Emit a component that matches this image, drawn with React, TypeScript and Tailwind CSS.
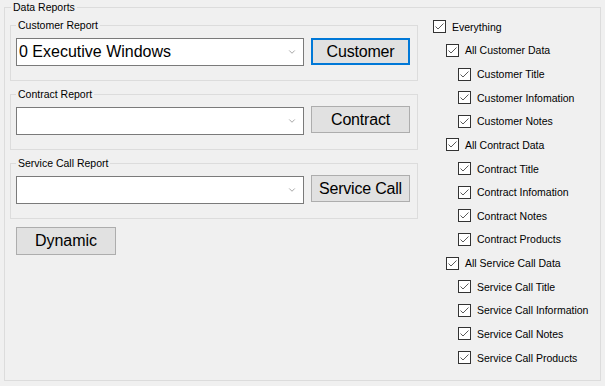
import { ChevronDown } from "lucide-react";

type TCheckItem = {
  text: string;
  level: number;
};

const checkItems: Array<TCheckItem> = [
  { text: "Everything", level: 0 },
  { text: "All Customer Data", level: 1 },
  { text: "Customer Title", level: 2 },
  { text: "Customer Infomation", level: 2 },
  { text: "Customer Notes", level: 2 },
  { text: "All Contract Data", level: 1 },
  { text: "Contract Title", level: 2 },
  { text: "Contract Infomation", level: 2 },
  { text: "Contract Notes", level: 2 },
  { text: "Contract Products", level: 2 },
  { text: "All Service Call Data", level: 1 },
  { text: "Service Call Title", level: 2 },
  { text: "Service Call Information", level: 2 },
  { text: "Service Call Notes", level: 2 },
  { text: "Service Call Products", level: 2 },
];

const indent = ["pl-0", "pl-[13px]", "pl-[25px]"];

function CheckBox() {
  return (
    <svg width="13" height="13" viewBox="0 0 13 13" className="shrink-0">
      <rect x="0.5" y="0.5" width="12" height="12" fill="#ffffff" stroke="#333333" />
      <polyline points="2.5,6.5 5,9 10.5,3.5" fill="none" stroke="#5a5a5a" strokeWidth="1" />
    </svg>
  );
}

function ReportGroup({ title, value, button, focused }: { title: string; value: string; button: string; focused?: boolean }) {
  return (
    <div className="relative h-[56px] border border-[#dcdcdc]">
      <span className="absolute -top-[7px] left-[5px] px-[2px] bg-[#f0f0f0] leading-[12px] text-[10.5px] text-black">{title}</span>
      <div className="flex items-start gap-[7px] pt-[12px] pl-[5px]">
        <div className="flex items-center w-[288px] h-[28px] bg-white border border-[#7a7a7a] pl-[2px] pr-[6px]">
          <span className="flex-1 text-[16px] leading-[20px] text-black">{value}</span>
          <ChevronDown size={10} strokeWidth={1.5} color="#707070" />
        </div>
        <button
          className={
            focused
              ? "w-[99px] h-[27px] bg-[#e1e1e1] border-2 border-[#0078d7] text-[16px] leading-[20px] tracking-[-0.2px] text-black"
              : "w-[99px] h-[27px] -mt-[1px] bg-[#e1e1e1] border border-[#adadad] text-[16px] leading-[20px] tracking-[-0.2px] text-black"
          }
        >
          {button}
        </button>
      </div>
    </div>
  );
}

export default function App() {
  return (
    <div className="w-[605px] h-[386px] bg-[#f0f0f0] pt-[7px] pl-[4px] font-['Liberation_Sans',Arial,sans-serif]">
      <div className="relative w-[597px] h-[374px] border border-[#dcdcdc]">
        <span className="absolute -top-[7px] left-[6px] px-[2px] bg-[#f0f0f0] leading-[12px] text-[10.5px] text-black">Data Reports</span>

        <div className="flex">
          <div className="flex flex-col gap-[13px] w-[408px] ml-[5px] mt-[17px]">
            <ReportGroup title="Customer Report" value="0 Executive Windows" button="Customer" focused />
            <ReportGroup title="Contract Report" value="" button="Contract" />
            <ReportGroup title="Service Call Report" value="" button="Service Call" />
            <button className="ml-[6px] -mt-[5px] w-[100px] h-[28px] bg-[#e1e1e1] border border-[#adadad] text-[16px] leading-[20px] text-black">
              Dynamic
            </button>
          </div>

          <ul className="ml-[15px] mt-[7px]">
            {checkItems.map(item => (
              <li key={item.text} className={`flex items-center gap-[6px] h-[23.64px] ${indent[item.level]}`}>
                <CheckBox />
                <span className="text-[10.5px] leading-[12px] text-black whitespace-nowrap">{item.text}</span>
              </li>
            ))}
          </ul>
        </div>
      </div>
    </div>
  );
}
